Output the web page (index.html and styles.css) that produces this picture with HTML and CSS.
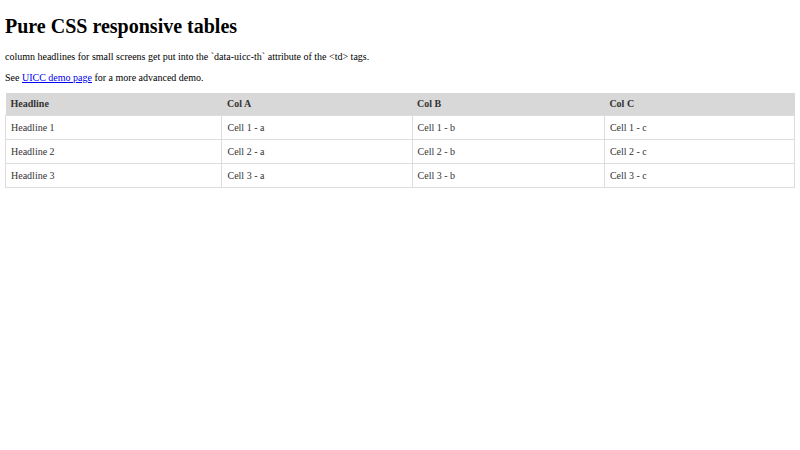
FILE: index.html
```html
<!DOCTYPE html>
<html>
<head>
<meta charset="utf-8">
<title>Pure CSS responsive tables</title>
<link rel="stylesheet" href="styles.css">
</head>
<body>
<h1 class="title">Pure CSS responsive tables</h1>
<p class="text">column headlines for small screens get put into the `data-uicc-th` attribute of the &lt;td&gt; tags.</p>
<p class="text">See <a href="#">UICC demo page</a> for a more advanced demo.</p>
<table class="uicc">
<thead>
<tr><th>Headline</th><th>Col A</th><th>Col B</th><th>Col C</th></tr>
</thead>
<tbody>
<tr><td>Headline 1</td><td>Cell 1 - a</td><td>Cell 1 - b</td><td>Cell 1 - c</td></tr>
<tr><td>Headline 2</td><td>Cell 2 - a</td><td>Cell 2 - b</td><td>Cell 2 - c</td></tr>
<tr><td>Headline 3</td><td>Cell 3 - a</td><td>Cell 3 - b</td><td>Cell 3 - c</td></tr>
</tbody>
</table>
</body>
</html>
```
FILE: styles.css
```css
body {
  margin: 5px;
  font-family: "Liberation Serif", "Times New Roman", serif;
  font-size: 10px;
  color: #000;
  background: #fff;
}
.title {
  font-size: 20px;
  font-weight: bold;
  margin: 10px 0 13px;
}
.text {
  margin: 10px 0;
}
.text a {
  color: #00e;
}
.uicc {
  width: 100%;
  border-collapse: collapse;
  color: #333;
}
.uicc th {
  background: #d8d8d8;
  text-align: left;
  font-weight: bold;
  padding: 5px;
  line-height: 12px;
}
.uicc td {
  padding: 5px;
  line-height: 13px;
  border: 1px solid #dddddd;
}
```
